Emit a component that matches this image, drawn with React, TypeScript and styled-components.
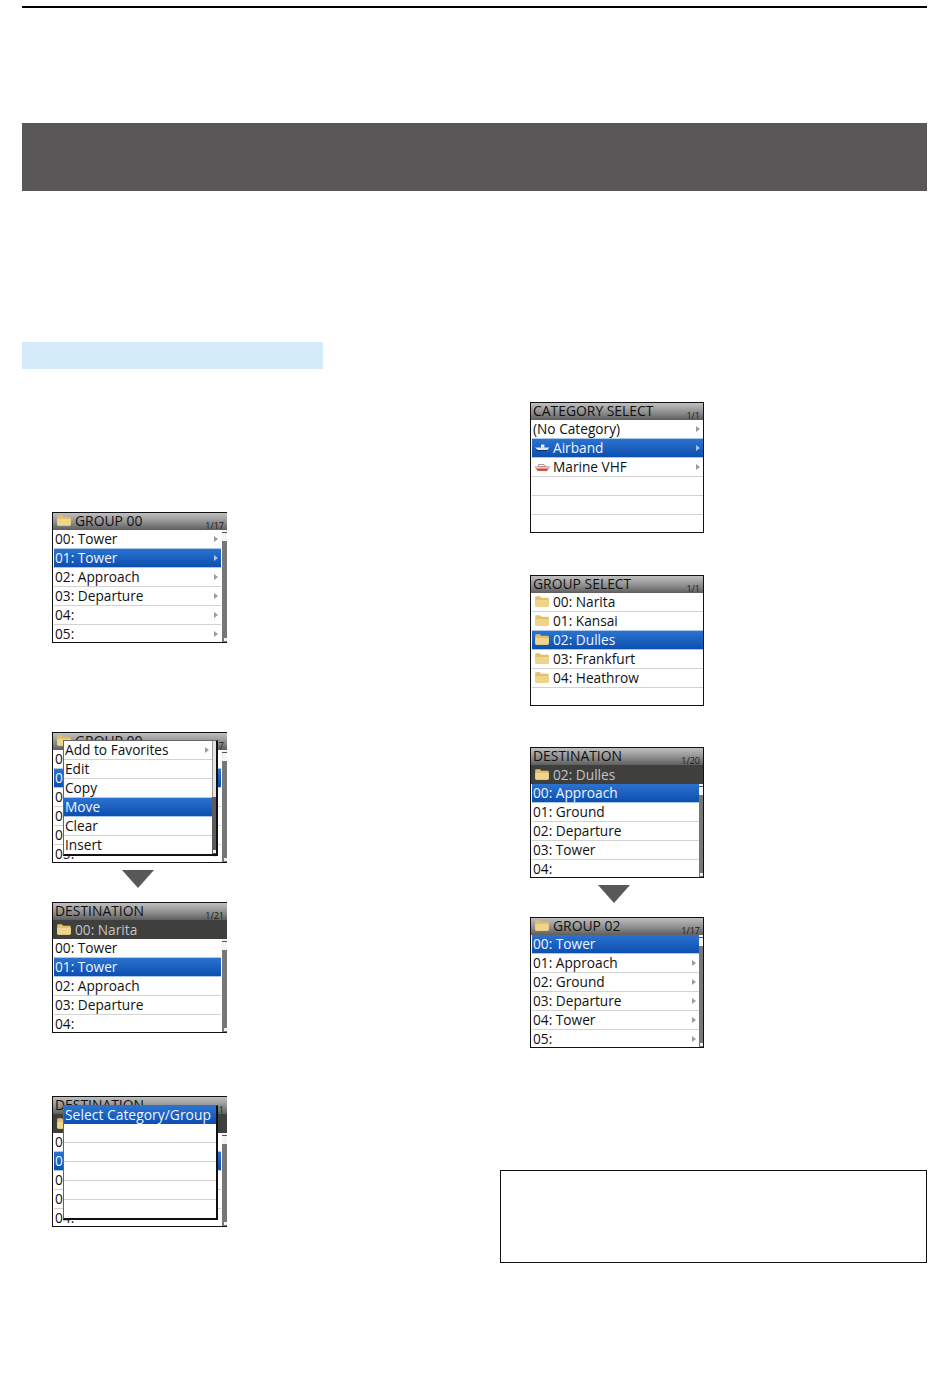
import React from "react";
import styled, { createGlobalStyle } from "styled-components";

const Global = createGlobalStyle`
  html, body { margin: 0; padding: 0; background: #fff; }
  body { font-family: "Open Sans", "Noto Sans", sans-serif; }
`;

const Page = styled.div`
  width: 950px;
  min-height: 1387px;
  box-sizing: border-box;
  padding: 6px 23px 0 22px;
  background: #fff;
`;
const TopRule = styled.div`height: 2px; background: #000;`;
const Banner = styled.div`height: 68px; margin-top: 115px; background: #595757;`;
const Columns = styled.div`
  display: grid;
  grid-template-columns: 478px 427px;
  margin-top: 151px;
`;
const Column = styled.div<{ $top: number }>`
  display: flex;
  flex-direction: column;
  align-items: flex-start;
  padding-top: ${p => p.$top}px;
`;
const SubHeading = styled.div`width: 301px; height: 27px; background: #d4ecf9;`;
const Slot = styled.div<{ $gap: number }>`
  margin-top: ${p => p.$gap}px;
  margin-left: 30px;
`;
const DownArrow = styled.div<{ $indent: number }>`
  width: 0;
  height: 0;
  margin: 7px 0 14px ${p => p.$indent}px;
  border-left: 16.5px solid transparent;
  border-right: 16.5px solid transparent;
  border-top: 18px solid #595757;
`;
const NoteBox = styled.div`
  width: 427px;
  height: 93px;
  box-sizing: border-box;
  margin-top: 122px;
  border: 1px solid #111;
`;

const ScreenFrame = styled.div<{ $open?: boolean }>`
  position: relative;
  width: ${p => (p.$open ? 175 : 174)}px;
  height: 131px;
  box-sizing: border-box;
  border: 1px solid #111;
  border-right: ${p => (p.$open ? "none" : "1px solid #111")};
  background: #fff;
  display: flex;
  flex-direction: column;
  overflow: hidden;
  color: #111;
  font-size: 13.7px;
  line-height: 19px;
`;
const TitleBar = styled.div`
  flex: 0 0 17px;
  height: 17px;
  box-sizing: border-box;
  display: flex;
  align-items: center;
  padding: 0 1px 2px 2px;
  background: linear-gradient(#c0c0c0, #8e8e8e 55%, #5e5e5e);
  color: #111;
  font-size: 13.9px;
  white-space: nowrap;
`;
const TitleText = styled.span`flex: 1;`;
const Counter = styled.span`
  font-size: 9px;
  line-height: 8px;
  align-self: flex-end;
  margin: 0 2px -2px 0;
  color: #1a1a1a;
`;
const SubBar = styled.div`
  flex: 0 0 18px;
  box-sizing: border-box;
  display: flex;
  align-items: center;
  padding: 0 0 0 2px;
  background: #3f3f3d;
  color: #c4c4c4;
  white-space: nowrap;
`;
const Body = styled.div`
  flex: 1;
  min-height: 0;
  display: flex;
  overflow: hidden;
`;
const RowList = styled.div`
  flex: 1;
  min-width: 0;
  padding-left: 1px;
`;
const Row = styled.div<{ $on?: boolean }>`
  height: 19px;
  box-sizing: border-box;
  padding: 0 3px 1px 1px;
  display: flex;
  align-items: center;
  white-space: nowrap;
  border-bottom: 1px solid ${p => (p.$on ? "#a9c8ea" : "#d2d2d2")};
  color: ${p => (p.$on ? "#eef4ff" : "#111")};
  background: ${p => (p.$on ? "linear-gradient(#2c72cf, #0b4fb0)" : "transparent")};
  box-shadow: ${p => (p.$on ? "0 -1px 0 #a9c8ea" : "none")};
`;
const RowLabel = styled.span`flex: 1;`;
const Chevron = styled.span<{ $on?: boolean }>`
  width: 0;
  height: 0;
  border-left: 4px solid ${p => (p.$on ? "#a8c6ec" : "#9c9c9c")};
  border-top: 3.5px solid transparent;
  border-bottom: 3.5px solid transparent;
`;
const Track = styled.div<{ $open?: boolean }>`
  flex: 0 0 ${p => (p.$open ? 5 : 4)}px;
  margin-left: ${p => (p.$open ? 1 : 0)}px;
  background: #777;
  display: flex;
  flex-direction: column;
  justify-content: space-between;
`;
const TrackThumb = styled.div`
  height: 11px;
  background: linear-gradient(#f4f4f4 0 2px, #555 2px 3px, #f4f4f4 3px);
`;
const TrackEnd = styled.div`
  height: 3px;
  width: 3px;
  align-self: flex-end;
  margin-bottom: 1px;
  background: #f2f2f2;
`;

const IconSpot = styled.span`
  flex: 0 0 20px;
  box-sizing: border-box;
  padding-left: 2px;
  display: flex;
  align-items: center;
  height: 12px;
`;

const Popup = styled.div<{ $top: number; $height: number }>`
  position: absolute;
  top: ${p => p.$top}px;
  left: 10px;
  width: 155px;
  height: ${p => p.$height}px;
  box-sizing: border-box;
  display: flex;
  background: #fff;
  border-top: 1px solid #666;
  border-left: 1px solid #666;
  border-right: 2px solid #111;
  border-bottom: 2px solid #111;
  overflow: hidden;
`;
const PopupList = styled.div`flex: 1; min-width: 0;`;
const PopupTrack = styled.div`
  flex: 0 0 4px;
  background: #5c5c5c;
  display: flex;
  flex-direction: column;
  justify-content: space-between;
`;
const PopupThumb = styled.div`height: 56px; background: #e4e4e4; border-left: 1px solid #999;`;
const PopupHead = styled.div`
  height: 18px;
  box-sizing: border-box;
  padding: 0 0 1px 1px;
  display: flex;
  align-items: center;
  color: #eef4ff;
  background: linear-gradient(#2c72cf, #0b4fb0);
  font-size: 13.9px;
  white-space: nowrap;
`;
const EmptyRow = styled.div`height: 19px; box-sizing: border-box; border-bottom: 1px solid #d2d2d2;`;

const Folder = () => (
  <svg width="14" height="11" viewBox="0 0 14 11" aria-hidden="true">
    <path d="M.2 1.5 C.2 .7 .7 .3 1.4 .3 H5 L6.2 1.7 H12.6 C13.3 1.7 13.8 2.2 13.8 2.9 V9.6 C13.8 10.3 13.3 10.8 12.6 10.8 H1.4 C.7 10.8 .2 10.3 .2 9.6 Z" fill="#e3bf68" />
    <path d="M.2 4 H13.8 V9.6 C13.8 10.3 13.3 10.8 12.6 10.8 H1.4 C.7 10.8 .2 10.3 .2 9.6 Z" fill="#efd48c" />
  </svg>
);
const Plane = () => (
  <svg width="15" height="9" viewBox="0 0 15 9" aria-hidden="true">
    <path d="M0 4.6 H14.5 L12 7.2 H3 Z" fill="#dfe8f3" />
    <rect x="6" y="1.6" width="3.4" height="3" fill="#f4f4f4" />
    <rect x="1" y="7" width="11" height="1" fill="#0a2f66" />
  </svg>
);
const Boat = () => (
  <svg width="15" height="10" viewBox="0 0 15 10" aria-hidden="true">
    <path d="M3.5 4.5 V2.5 H9 L11 4.5 Z" fill="#fff" stroke="#8a6f6f" strokeWidth=".7" />
    <path d="M.3 4.8 H14.6 L12 8.6 H2.6 Z" fill="#fbe4e0" stroke="#a66" strokeWidth=".6" />
    <path d="M1.4 6.6 H13.2 L12 8.8 H2.6 Z" fill="#d8413c" />
  </svg>
);

type RowData = { label: string; icon?: React.ReactNode; chevron?: boolean };

const Screen = ({
  title, titleIcon, counter, sub, rows, selected, scroll, open, children,
}: {
  title: string;
  titleIcon?: boolean;
  counter: string;
  sub?: string;
  rows: RowData[];
  selected: number;
  scroll?: boolean;
  open?: boolean;
  children?: React.ReactNode;
}) => (
  <ScreenFrame $open={open}>
    <TitleBar>
      {titleIcon && <IconSpot><Folder /></IconSpot>}
      <TitleText>{title}</TitleText>
      <Counter>{counter}</Counter>
    </TitleBar>
    {sub && <SubBar><IconSpot><Folder /></IconSpot>{sub}</SubBar>}
    <Body>
      <RowList>
        {rows.map((r, i) => (
          <Row key={i} $on={i === selected}>
            {r.icon && <IconSpot>{r.icon}</IconSpot>}
            <RowLabel>{r.label}</RowLabel>
            {r.chevron && <Chevron $on={i === selected} />}
          </Row>
        ))}
      </RowList>
      {scroll && (
        <Track $open={open}>
          <TrackThumb />
          <TrackEnd />
        </Track>
      )}
    </Body>
    {children}
  </ScreenFrame>
);

const chev = (labels: string[]): RowData[] => labels.map(label => ({ label, chevron: true }));
const plain = (labels: string[]): RowData[] => labels.map(label => ({ label }));
const folders = (labels: string[]): RowData[] => labels.map(label => ({ label, icon: <Folder /> }));

const group00 = chev(["00: Tower", "01: Tower", "02: Approach", "03: Departure", "04:", "05:"]);
const dest00 = plain(["00: Tower", "01: Tower", "02: Approach", "03: Departure", "04:"]);

export default function App() {
  return (
    <Page>
      <Global />
      <TopRule />
      <Banner />
      <Columns>
        <Column $top={0}>
          <SubHeading />
          <Slot $gap={143}>
            <Screen title="GROUP 00" titleIcon counter="1/17" rows={group00} selected={1} scroll open />
          </Slot>
          <Slot $gap={89}>
            <Screen title="GROUP 00" titleIcon counter="1/17" rows={group00} selected={1} scroll open>
              <Popup $top={7} $height={116}>
                <PopupList>
                  <Row><RowLabel>Add to Favorites</RowLabel><Chevron /></Row>
                  <Row><RowLabel>Edit</RowLabel></Row>
                  <Row><RowLabel>Copy</RowLabel></Row>
                  <Row $on><RowLabel>Move</RowLabel></Row>
                  <Row><RowLabel>Clear</RowLabel></Row>
                  <Row><RowLabel>Insert</RowLabel></Row>
                </PopupList>
                <PopupTrack>
                  <PopupThumb />
                  <TrackEnd />
                </PopupTrack>
              </Popup>
            </Screen>
          </Slot>
          <DownArrow $indent={100} />
          <Slot $gap={0}>
            <Screen title="DESTINATION" counter="1/21" sub="00: Narita" rows={dest00} selected={1} scroll open />
          </Slot>
          <Slot $gap={63}>
            <Screen title="DESTINATION" counter="1/21" sub="00: Narita" rows={dest00} selected={1} scroll open>
              <Popup $top={8} $height={115}>
                <PopupList>
                  <PopupHead>Select Category/Group</PopupHead>
                  <EmptyRow />
                  <EmptyRow />
                  <EmptyRow />
                  <EmptyRow />
                </PopupList>
              </Popup>
            </Screen>
          </Slot>
        </Column>
        <Column $top={60}>
          <Slot $gap={0}>
            <Screen
              title="CATEGORY SELECT"
              counter="1/1"
              selected={1}
              rows={[
                { label: "(No Category)", chevron: true },
                { label: "Airband", icon: <Plane />, chevron: true },
                { label: "Marine VHF", icon: <Boat />, chevron: true },
                { label: "" },
                { label: "" },
                { label: "" },
              ]}
            />
          </Slot>
          <Slot $gap={42}>
            <Screen
              title="GROUP SELECT"
              counter="1/1"
              selected={2}
              rows={[
                ...folders(["00: Narita", "01: Kansai", "02: Dulles", "03: Frankfurt", "04: Heathrow"]),
                { label: "" },
              ]}
            />
          </Slot>
          <Slot $gap={41}>
            <Screen
              title="DESTINATION"
              counter="1/20"
              sub="02: Dulles"
              rows={plain(["00: Approach", "01: Ground", "02: Departure", "03: Tower", "04:"])}
              selected={0}
              scroll
            />
          </Slot>
          <DownArrow $indent={98} />
          <Slot $gap={0}>
            <Screen
              title="GROUP 02"
              titleIcon
              counter="1/17"
              rows={[
                { label: "00: Tower" },
                ...chev(["01: Approach", "02: Ground", "03: Departure", "04: Tower", "05:"]),
              ]}
              selected={0}
              scroll
            />
          </Slot>
          <NoteBox />
        </Column>
      </Columns>
    </Page>
  );
}
